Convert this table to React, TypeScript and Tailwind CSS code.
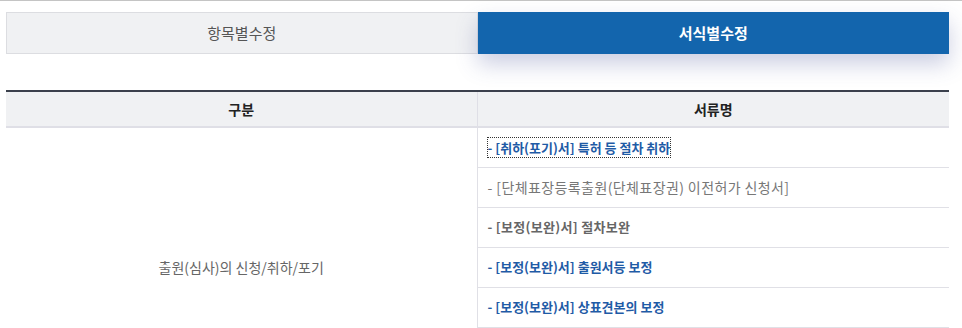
import { useState } from "react";

type DocRow = {
  label: string;
  tone: "link" | "muted" | "dark";
};

const docs: DocRow[] = [
  { label: "- [취하(포기)서] 특허 등 절차 취하", tone: "link" },
  { label: "- [단체표장등록출원(단체표장권) 이전허가 신청서]", tone: "muted" },
  { label: "- [보정(보완)서] 절차보완", tone: "dark" },
  { label: "- [보정(보완)서] 출원서등 보정", tone: "link" },
  { label: "- [보정(보완)서] 상표견본의 보정", tone: "link" },
  { label: "- [보정(보완)서] 지정상품의 보정", tone: "link" },
  { label: "- [취하(포기)서] 상표권 포기", tone: "link" },
];

const toneClass = {
  link: "font-bold text-[#1f5ba6]",
  muted: "text-[14px] tracking-[0.4px] text-[#777]",
  dark: "font-bold tracking-[0.3px] text-[#666]",
};

function App() {
  const [tab, setTab] = useState<"item" | "form">("form");

  const tabClass = (on: boolean) =>
    on
      ? "relative z-10 h-[42px] bg-[#1365ad] text-[15px] font-bold text-white shadow-[0_10px_22px_rgba(70,80,150,0.28)]"
      : "h-[42px] border border-[#dcdde1] bg-[#f0f1f3] text-[15px] text-[#555]";

  return (
    <div
      className="min-h-screen border-t border-[#c4c4c4] bg-white"
      style={{ fontFamily: '"Noto Sans CJK KR", "Noto Sans", sans-serif' }}
    >
      <div className="ml-[6px] w-[943px] pt-[11px]">
        {/* tabs */}
        <div className="grid grid-cols-2">
          <button type="button" onClick={() => setTab("item")} className={tabClass(tab === "item")}>
            항목별수정
          </button>
          <button type="button" onClick={() => setTab("form")} className={tabClass(tab === "form")}>
            서식별수정
          </button>
        </div>

        {/* document table */}
        <table className="mt-[36px] w-full border-collapse border-t-2 border-[#3b404c] text-[13px]">
          <thead>
            <tr className="h-[36px] border-b-2 border-[#dfdfe6] bg-[#f0f1f3] text-[14px] font-bold text-[#222]">
              <th className="w-[471px] border-r border-[#dfdfe6] font-bold">구분</th>
              <th className="font-bold">서류명</th>
            </tr>
          </thead>
          <tbody>
            {docs.map((d, i) => (
              <tr key={d.label} className="h-[40px] border-b border-[#e0e0e6]">
                {i === 0 && (
                  <td
                    rowSpan={docs.length}
                    className="border-r border-[#e0e0e6] text-center align-middle text-[14px] text-[#666]"
                  >
                    출원(심사)의 신청/취하/포기
                  </td>
                )}
                <td className="pl-[10px] align-middle">
                  <a
                    href="#"
                    className={`${toneClass[d.tone]} ${
                      i === 0 ? "outline outline-1 outline-dotted outline-[#333]" : ""
                    }`}
                  >
                    {d.label}
                  </a>
                </td>
              </tr>
            ))}
          </tbody>
        </table>
      </div>
    </div>
  );
}

export default App;
